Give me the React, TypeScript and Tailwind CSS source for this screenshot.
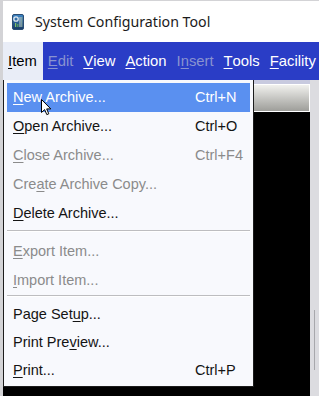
import React from "react";

type Entry =
  | { sep: true; line: string; h: string }
  | {
      sep?: false;
      pre: string;
      key: string;
      post: string;
      shortcut?: string;
      disabled?: boolean;
      active?: boolean;
      h: string;
    };

const entries: Entry[] = [
  { pre: "", key: "N", post: "ew Archive...", shortcut: "Ctrl+N", active: true, h: "h-[29px]" },
  { pre: "", key: "O", post: "pen Archive...", shortcut: "Ctrl+O", h: "h-[29px]" },
  { pre: "", key: "C", post: "lose Archive...", shortcut: "Ctrl+F4", disabled: true, h: "h-[29px]" },
  { pre: "Cre", key: "a", post: "te Archive Copy...", disabled: true, h: "h-[29px]" },
  { pre: "", key: "D", post: "elete Archive...", h: "h-[29px]" },
  { sep: true, line: "mt-[2px]", h: "h-[7px]" },
  { pre: "", key: "E", post: "xport Item...", disabled: true, h: "h-[29px]" },
  { pre: "", key: "I", post: "mport Item...", disabled: true, h: "h-[29px]" },
  { sep: true, line: "mt-0", h: "h-[6px]" },
  { pre: "Page Set", key: "u", post: "p...", h: "h-[28px]" },
  { pre: "Print Pre", key: "v", post: "iew...", h: "h-[28px]" },
  { pre: "", key: "P", post: "rint...", shortcut: "Ctrl+P", h: "h-[28px]" },
];

const menuBar = [
  { pre: "", key: "I", post: "tem", state: "open" },
  { pre: "", key: "E", post: "dit", state: "off" },
  { pre: "", key: "V", post: "iew", state: "on" },
  { pre: "", key: "A", post: "ction", state: "on" },
  { pre: "I", key: "n", post: "sert", state: "off" },
  { pre: "", key: "T", post: "ools", state: "on" },
  { pre: "", key: "F", post: "acility", state: "on" },
];

function AppIcon() {
  return (
    <svg width="12" height="16" viewBox="0 0 12 16">
      <defs>
        <linearGradient id="ig" x1="0" y1="0" x2="0" y2="1">
          <stop offset="0" stopColor="#3d86c6" />
          <stop offset="1" stopColor="#173a63" />
        </linearGradient>
      </defs>
      <rect x="0.5" y="0.5" width="11" height="15" rx="1.5" fill="url(#ig)" stroke="#2a4d74" />
      <circle cx="4" cy="5" r="2.2" fill="none" stroke="#dfe8f0" strokeWidth="1.3" />
      <rect x="7.5" y="3" width="1" height="10" fill="#c9d3cf" />
      <rect x="9.3" y="3" width="1" height="10" fill="#9fb8a8" />
      <rect x="3" y="9" width="1.2" height="4" fill="#7fbf6a" />
      <rect x="5.2" y="10" width="1.2" height="3" fill="#5aa85a" />
    </svg>
  );
}

function Cursor() {
  return (
    <svg className="absolute left-[38px] top-[98px]" width="12" height="17" viewBox="0 0 12 17">
      <path d="M0.5 0.5 L0.5 13.5 L3.6 10.6 L5.8 15.6 L7.8 14.8 L5.7 9.9 L9.8 9.9 Z" fill="#fff" stroke="#000" strokeWidth="1" strokeLinejoin="round" />
    </svg>
  );
}

export default function App() {
  return (
    <div className="relative flex h-[396px] w-[319px] flex-col overflow-hidden border-l-[3px] border-t border-[#d3d3d6] bg-[#d9d9de]">
      <div className="flex h-[41px] items-center gap-[11px] bg-white pl-[9px] pt-[1px] font-['Noto_Sans',sans-serif] text-[14.2px] text-[#1b1b1b]">
        <AppIcon />
        <span>System Configuration Tool</span>
      </div>

      <div className="flex h-[38px] items-stretch bg-[#2a3dc6] font-['Liberation_Sans',Arial,sans-serif] text-[14.8px]">
        {menuBar.map((m) => (
          <div
            key={m.post}
            className={
              m.state === "open"
                ? "flex items-center bg-[#e9edf7] pl-[5px] pr-[6px] text-black"
                : m.state === "off"
                  ? "flex items-center px-[5px] text-[#8993d0]"
                  : "flex items-center px-[5px] text-white"
            }
          >
            {m.pre}
            <span className="underline underline-offset-2">{m.key}</span>
            {m.post}
          </div>
        ))}
      </div>

      <div className="flex flex-1">
        <div className="flex flex-1 flex-col bg-[#c8cadf] pt-[4px]">
          <div className="h-[28px] border border-white bg-gradient-to-b from-[#f1f1ee] to-[#9e9e9a]" />
          <div className="flex-1 bg-black" />
        </div>
        <div className="relative w-[9px] bg-[#dcdce0]">
          <div className="absolute left-[4px] top-[230px] h-[60px] w-px bg-[#a8a8ac]" />
        </div>
      </div>

      <div className="absolute left-0 top-[79px] w-[251px] border-x border-b border-[#1c1c1c] bg-[#f8f9fd] px-[3px] pb-[1px] pt-[3px] font-['Liberation_Sans',Arial,sans-serif] text-[14.5px]">
        {entries.map((e, i) =>
          e.sep ? (
            <div key={i} className={e.h}>
              <div className={`${e.line} h-[2px] border-t border-[#bdbdc0] bg-white`} />
            </div>
          ) : (
            <div
              key={i}
              className={`grid grid-cols-[182px_1fr] items-center pl-[6px] ${e.h} ${
                e.active ? "bg-[#5a90f0] text-white" : e.disabled ? "text-[#8b8b8b]" : "text-[#141414]"
              }`}
            >
              <span>
                {e.pre}
                <span className="underline underline-offset-2">{e.key}</span>
                {e.post}
              </span>
              <span>{e.shortcut}</span>
            </div>
          )
        )}
      </div>

      <Cursor />
    </div>
  );
}
